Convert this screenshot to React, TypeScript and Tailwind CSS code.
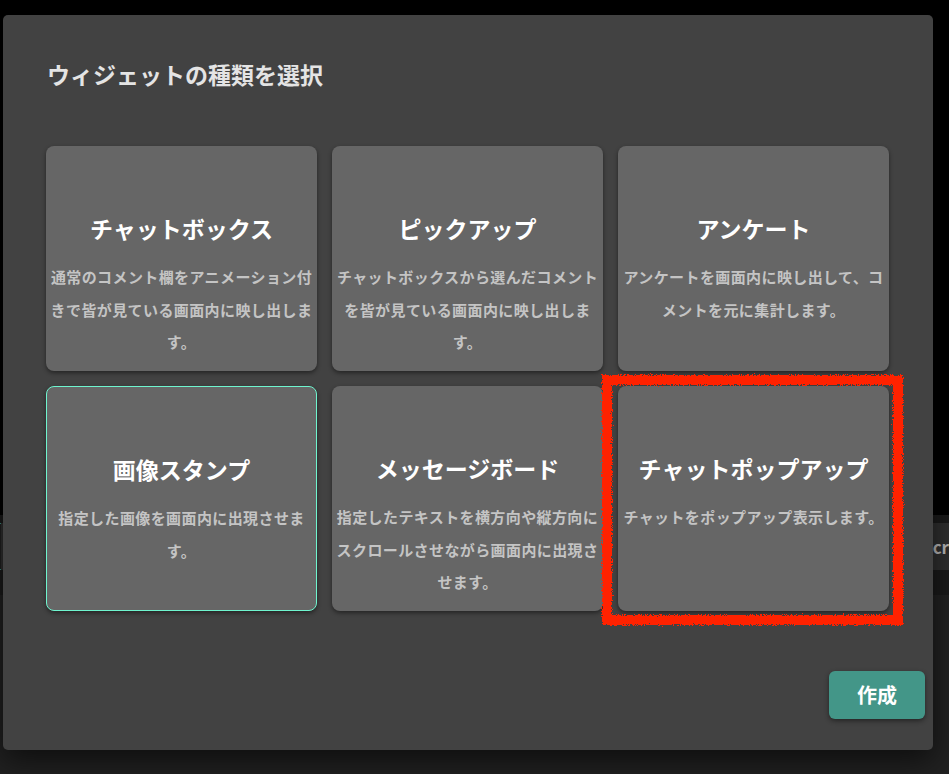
import React from "react";

type Widget = {
  title: string;
  description: string;
  selected?: boolean;
};

const widgets: Widget[] = [
  {
    title: "チャットボックス",
    description: "通常のコメント欄をアニメーション付きで皆が見ている画面内に映し出します。",
  },
  {
    title: "ピックアップ",
    description: "チャットボックスから選んだコメントを皆が見ている画面内に映し出します。",
  },
  {
    title: "アンケート",
    description: "アンケートを画面内に映し出して、コメントを元に集計します。",
  },
  {
    title: "画像スタンプ",
    description: "指定した画像を画面内に出現させます。",
    selected: true,
  },
  {
    title: "メッセージボード",
    description: "指定したテキストを横方向や縦方向にスクロールさせながら画面内に出現させます。",
  },
  {
    title: "チャットポップアップ",
    description: "チャットをポップアップ表示します。",
  },
];

const font = {
  fontFamily: '"Noto Sans CJK JP", "Noto Sans", sans-serif',
};

function WidgetCard({ title, description, selected }: Widget) {
  return (
    <div
      className={`flex h-[225px] flex-col items-center rounded-lg bg-[#666666] px-[4px] pt-[66px] text-center shadow-[0_2px_4px_rgba(0,0,0,0.45)] ${
        selected ? "border border-[#6ff5cf] pt-[65px]" : ""
      }`}
    >
      <div className="text-[23px] font-bold leading-[32px] text-white">{title}</div>
      <p className="mt-[17px] text-[15px] font-bold leading-[32.5px] tracking-[0.4px] text-[#c4c4c4]">
        {description}
      </p>
    </div>
  );
}

export default function App() {
  return (
    <div className="relative h-[774px] w-[949px] overflow-hidden bg-black" style={font}>
      {/* dimmed app behind the dialog */}
      <div className="h-[515px] bg-black" />
      <div className="h-[8px] bg-[#1a1a1a]" />
      <div className="flex h-[47px] items-center bg-[#2f2f2f]">
        <div className="h-full w-[3px] border-y border-[#3a8f80] bg-[#1f1f1f]" />
        <div className="ml-[932px] whitespace-nowrap text-[17px] font-bold text-[#b9b9b9]">cr</div>
      </div>
      <div className="h-[25px] bg-[#1a1a1a]" />
      <div className="h-[179px] bg-[#212121]" />

      {/* dialog */}
      <div className="absolute left-[3px] top-[15px] flex h-[735px] w-[930px] flex-col rounded-[5px] bg-[#424242] shadow-[0_10px_30px_rgba(0,0,0,0.6)]">
        <h2 className="pl-[44px] pt-[43px] text-[23px] font-bold leading-[32px] text-[#e4e4e4]">
          ウィジェットの種類を選択
        </h2>
        <div className="ml-[43px] mt-[56px] grid w-[843px] grid-cols-3 gap-[15px]">
          {widgets.map((w) => (
            <WidgetCard key={w.title} {...w} />
          ))}
        </div>
        <div className="mt-auto flex justify-end pb-[31px] pr-[8px]">
          <button className="h-[48px] w-[96px] rounded-[6px] bg-[#439688] text-[20px] font-bold text-white shadow-[0_2px_5px_rgba(0,0,0,0.45)]">
            作成
          </button>
        </div>
      </div>

      {/* red hand-drawn highlight */}
      <svg
        className="pointer-events-none absolute left-[597px] top-[370px]"
        width="312"
        height="260"
        viewBox="0 0 312 260"
      >
        <defs>
          <filter id="rough" x="-5%" y="-5%" width="110%" height="110%">
            <feTurbulence type="fractalNoise" baseFrequency="0.9" numOctaves="2" seed="3" />
            <feDisplacementMap in="SourceGraphic" scale="5" />
          </filter>
        </defs>
        <rect
          x="10"
          y="10"
          width="291"
          height="240"
          fill="none"
          stroke="#ff2200"
          strokeWidth="10"
          filter="url(#rough)"
        />
      </svg>
    </div>
  );
}
